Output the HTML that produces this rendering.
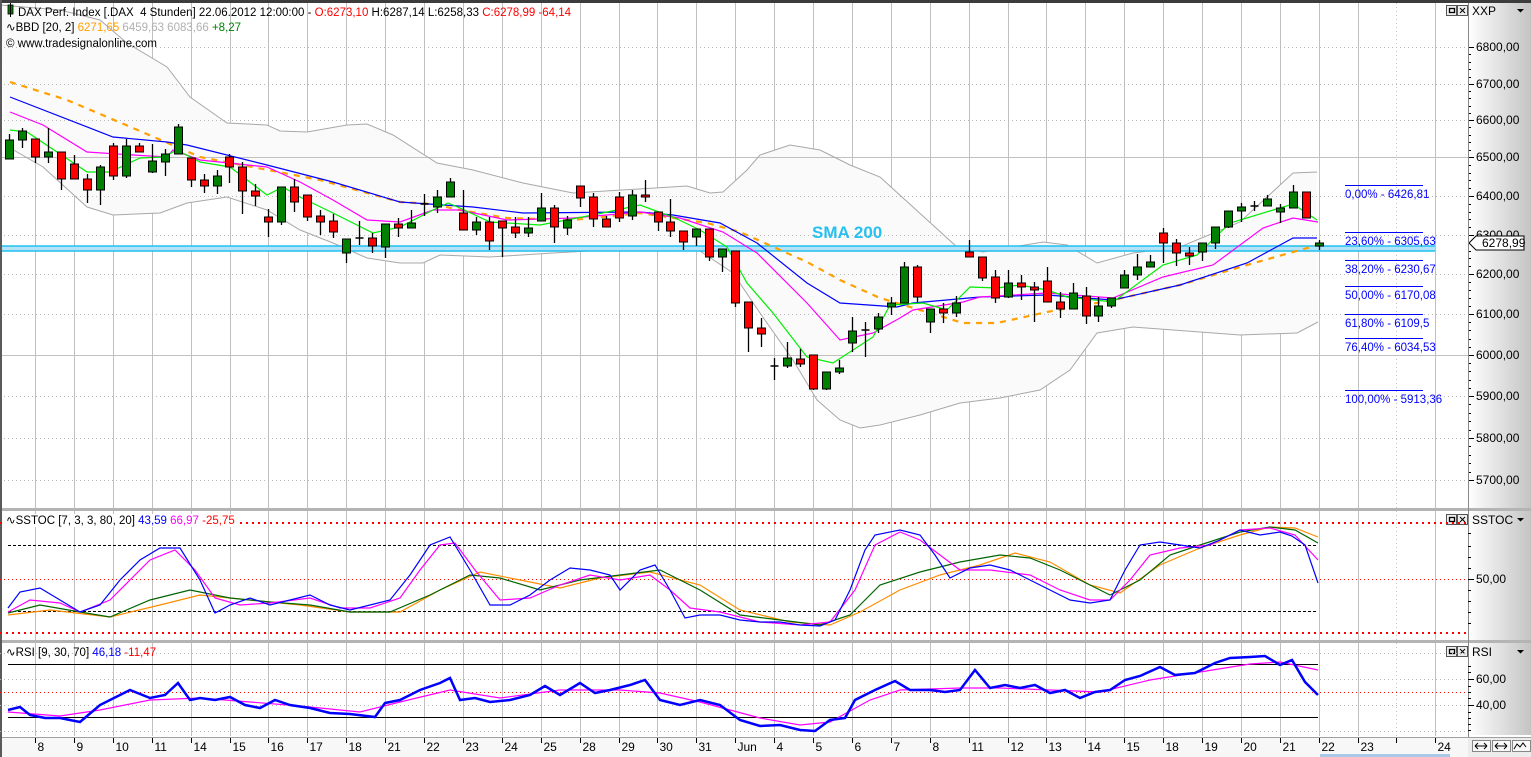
<!DOCTYPE html>
<html><head><meta charset="utf-8"><style>
html,body{margin:0;padding:0;width:1531px;height:757px;overflow:hidden;background:#fff}
svg{display:block;font-family:"Liberation Sans",Tahoma,sans-serif}
</style></head><body>
<svg id="s" width="1531" height="757" xmlns="http://www.w3.org/2000/svg">
<rect x="0" y="0" width="1531" height="757" fill="#fff"/>
<defs><linearGradient id="ax" x1="0" x2="1" y1="0" y2="0"><stop offset="0" stop-color="#ffffff"/><stop offset="1" stop-color="#c4c4c4"/></linearGradient></defs>
<g id="g"></g>
</svg>
<script>
var G=document.getElementById('g'),out='';
function add(s){out+=s;}
function pl(pts,st){var d=pts.map(function(p){return p[0]+','+p[1]}).join(' ');add('<polyline fill="none" points="'+d+'" '+st+'/>');}
function txt(x,y,t,st){add('<text x="'+x+'" y="'+y+'" '+(st||'')+'>'+t+'</text>');}
add('<rect x="1468" y="3" width="63" height="732" fill="url(#ax)"/>');
add('<rect x="1468" y="738" width="63" height="19" fill="#ececec"/>');
add('<rect x="0" y="738" width="1468" height="19" fill="#f7f7f7"/>');
add('<line x1="0" y1="737.5" x2="1531" y2="737.5" stroke="#a0a0a0"/>');
add('<rect x="1320" y="754" width="130" height="3" fill="#a8c8e8"/>');
var ticks=[];for(var k=0;k<34;k++)ticks.push(35+38.9*k);ticks.push(1358);ticks.push(1435);
var labels=['8','9','10','11','14','15','16','17','18','21','22','23','24','25','28','29','30','31','Jun','4','5','6','7','8','11','12','13','14','15','18','19','20','21','22','23','24'];
ticks.forEach(function(x,i){x=Math.round(x)+0.5;
 add('<line x1="'+x+'" y1="3" x2="'+x+'" y2="736" stroke="#c0c0c0"/>');
 add('<line x1="'+x+'" y1="738" x2="'+x+'" y2="743" stroke="#000"/>');
 txt(x+2,751,labels[i],'font-size="12" fill="#000"');});
add('<line x1="1396.5" y1="3" x2="1396.5" y2="736" stroke="#c0c0c0" stroke-dasharray="1,3"/>');
add('<line x1="1396.5" y1="738" x2="1396.5" y2="743" stroke="#000"/>');
var lv=[[6800,47],[6700,84],[6600,120],[6500,157],[6400,196],[6300,235],[6200,274],[6100,314],[6000,355],[5900,396],[5800,438],[5700,480]];
var up=[[0,5],[60,10],[100,20],[127,43],[167,67],[190,97],[227,123],[267,125],[280,131],[307,132],[347,125],[367,124],[393,135],[437,163],[473,170],[523,183],[573,193],[687,186],[710,193],[723,192],[747,170],[760,155],[790,145],[820,150],[850,165],[880,177],[957,247],[983,252],[1043,242],[1067,245],[1097,263],[1133,253],[1180,247],[1240,222],[1293,173],[1317,172]];
var lo=[[5,146],[10,148],[43,167],[87,207],[113,215],[160,213],[187,203],[227,197],[267,210],[300,230],[333,243],[367,258],[400,263],[423,263],[440,255],[490,257],[553,253],[607,250],[653,246],[700,251],[733,273],[760,313],[793,360],[817,400],[840,420],[860,428],[880,425],[920,415],[960,403],[1000,398],[1040,390],[1070,370],[1097,333],[1133,327],[1240,335],[1297,333],[1318,322]];
var poly=up.concat(lo.slice().reverse());
add('<polygon points="'+poly.map(function(p){return p.join(',')}).join(' ')+'" fill="#fafafa"/>');
lv.forEach(function(l){var y=l[1]+0.5;
 if(l[0]==6500||l[0]==6000)add('<line x1="0" y1="'+y+'" x2="1468" y2="'+y+'" stroke="#c0c0c0"/>');
 else add('<line x1="0" y1="'+y+'" x2="1468" y2="'+y+'" stroke="#b8b8b8" stroke-dasharray="1,3"/>');
 add('<line x1="1468" y1="'+y+'" x2="1474" y2="'+y+'" stroke="#000"/>');
 txt(1476,l[1]+4,l[0]+',00','font-size="12" fill="#000"');});
for(var i=0;i<11;i++){for(var j=1;j<5;j++){var y=Math.round(lv[i][1]+(lv[i+1][1]-lv[i][1])*j/5)+0.5;add('<line x1="1468" y1="'+y+'" x2="1471" y2="'+y+'" stroke="#000"/>');}}
pl(up,'stroke="#a8a8a8" stroke-width="1"');pl(lo,'stroke="#a8a8a8" stroke-width="1"');
add('<rect x="0" y="246" width="1435" height="5" fill="#b4e2f6"/>');
add('<line x1="0" y1="246" x2="1435" y2="246" stroke="#20c0f0" stroke-width="1.5"/><line x1="0" y1="251" x2="1435" y2="251" stroke="#20c0f0" stroke-width="1.5"/>');
txt(812,238,'SMA 200','font-size="17" font-weight="bold" fill="#28c0f0"');
var blue=[[10,97],[113,137],[167,142],[187,145],[267,165],[333,182],[400,202],[473,207],[523,213],[640,212],[673,215],[720,223],[757,243],[807,283],[840,303],[897,307],[913,303],[980,297],[1047,295],[1113,300],[1180,285],[1247,263],[1293,238],[1317,238]];
var mag=[[10,112],[43,125],[87,152],[133,155],[167,157],[173,150],[200,160],[267,167],[300,182],[333,200],[367,220],[400,222],[433,210],[460,210],[507,220],[573,218],[640,212],[680,218],[723,232],[757,253],[807,303],[840,340],[873,333],[900,318],[913,310],[963,302],[980,297],[1047,293],[1113,298],[1163,277],[1213,265],[1263,228],[1293,218],[1318,222]];
var grn=[[10,130],[27,132],[87,172],[110,172],[140,158],[163,157],[177,150],[200,162],[230,167],[267,195],[283,187],[300,197],[333,213],[373,233],[400,227],[433,210],[448,203],[460,208],[490,222],[540,225],[593,215],[640,205],[673,217],[700,230],[727,247],[747,283],[773,313],[807,357],[833,363],[873,337],[890,305],[923,303],[947,310],[970,287],[997,288],[1020,285],[1047,290],[1067,297],[1113,302],[1163,265],[1197,255],[1230,223],[1293,204],[1317,220]];
var org=[[10,82],[67,100],[133,128],[200,157],[320,180],[400,202],[433,204],[460,210],[507,218],[573,220],[640,213],[707,223],[740,232],[807,262],[840,280],[880,298],[930,313],[963,323],[997,323],[1047,312],[1113,300],[1180,285],[1247,265],[1318,245]];
pl(org,'stroke="#ffa000" stroke-width="2.2" stroke-dasharray="6,6"');
pl(blue,'stroke="#0000ff" stroke-width="1.2"');
pl(mag,'stroke="#ff00ff" stroke-width="1.2"');
pl(grn,'stroke="#00ee00" stroke-width="1.2"');
var C=[[140,159,134,159,'g'],[131,140,128,148,'g'],[139,157,139,163,'r'],[152,157,128,163,'g'],[152,179,152,190,'r'],[164,179,155,179,'r'],[179,190,174,203,'r'],[167,190,165,205,'g'],[146,176,143,180,'r'],[146,176,139,178,'g'],[146,152,143,152,'r'],[161,172,144,173,'g'],[154,162,149,176,'g'],[127,154,124,154,'g'],[158,180,158,187,'r'],[180,186,174,193,'r'],[176,186,170,194,'g'],[157,167,154,183,'r'],[167,191,162,214,'r'],[191,196,184,206,'r'],[217,222,209,237,'r'],[187,222,187,225,'g'],[187,202,179,212,'r'],[195,217,195,221,'r'],[216,222,210,235,'r'],[221,232,214,238,'r'],[239,253,239,263,'g'],[238,239,221,245,'d'],[238,246,233,253,'r'],[224,247,224,258,'g'],[224,228,218,237,'r'],[223,228,210,228,'g'],[204,205,194,216,'d'],[197,207,190,213,'g'],[182,197,178,197,'g'],[213,230,190,230,'r'],[222,230,217,235,'g'],[222,241,217,250,'r'],[221,228,221,257,'r'],[227,233,217,238,'r'],[228,233,217,237,'g'],[208,221,193,221,'g'],[208,227,205,243,'r'],[220,228,216,235,'g'],[186,198,186,207,'r'],[197,219,193,227,'r'],[219,227,216,227,'r'],[197,218,192,222,'r'],[195,216,190,220,'g'],[195,197,180,202,'r'],[212,222,212,231,'r'],[222,231,199,237,'r'],[231,242,231,250,'r'],[229,237,229,246,'g'],[229,257,229,261,'r'],[249,257,249,272,'g'],[251,303,251,307,'r'],[302,328,302,352,'r'],[328,334,318,347,'r'],[366,367,358,380,'d'],[358,366,342,368,'g'],[359,364,349,367,'r'],[355,389,355,390,'r'],[372,389,372,390,'g'],[368,372,360,374,'g'],[331,343,317,352,'g'],[330,331,322,357,'d'],[317,329,313,333,'g'],[303,307,297,315,'g'],[267,303,262,303,'g'],[267,297,265,302,'r'],[309,322,309,333,'g'],[309,313,303,323,'r'],[303,313,296,317,'g'],[252,257,240,257,'r'],[257,278,257,281,'r'],[277,298,270,303,'r'],[283,297,270,298,'g'],[283,287,275,300,'r'],[287,290,282,322,'r'],[281,302,267,302,'r'],[302,309,292,318,'r'],[293,309,283,309,'g'],[296,316,287,324,'r'],[306,316,297,322,'g'],[298,306,298,308,'g'],[275,288,270,288,'g'],[267,275,254,280,'g'],[262,267,255,267,'g'],[233,243,228,263,'r'],[243,253,239,266,'r'],[253,256,247,265,'r'],[243,252,243,261,'g'],[227,243,227,249,'g'],[211,227,211,228,'g'],[207,211,203,222,'g'],[206,207,201,211,'d'],[199,206,195,206,'g'],[208,212,204,223,'g'],[192,208,185,208,'g'],[192,218,192,218,'r'],[243,246,240,250,'g']];
C.forEach(function(c,i){var x=Math.round(9+12.97*i)+0.5;
 add('<line x1="'+x+'" y1="'+c[2]+'" x2="'+x+'" y2="'+c[3]+'" stroke="#000" stroke-width="1.3"/>');
 if(c[4]=='d'){add('<line x1="'+(x-4)+'" y1="'+c[0]+'" x2="'+(x+4)+'" y2="'+c[0]+'" stroke="#000" stroke-width="1.5"/>');}
 else{var h=Math.max(2,c[1]-c[0]);add('<rect x="'+(x-4)+'" y="'+c[0]+'" width="8" height="'+h+'" fill="'+(c[4]=='g'?'#008000':'#ff0000')+'" stroke="#000" stroke-width="1"/>');}});
var fib=[[185,'0,00% - 6426,81'],[232,'23,60% - 6305,63'],[260,'38,20% - 6230,67'],[286,'50,00% - 6170,08'],[314,'61,80% - 6109,5'],[338,'76,40% - 6034,53'],[390,'100,00% - 5913,36']];
fib.forEach(function(f){add('<line x1="1345" y1="'+(f[0]+0.5)+'" x2="1423" y2="'+(f[0]+0.5)+'" stroke="#0000ff"/>');txt(1345,f[0]+13,f[1],'font-size="11.5" fill="#0000ff"');});
add('<polygon points="1469,243 1476,236 1524,236 1524,250 1476,250" fill="#fff" stroke="#000"/>');
txt(1482,247,'6278,99','font-size="12" fill="#000"');
add('<rect x="8" y="5" width="5" height="9" fill="#008000" stroke="#000" stroke-width="0.8"/><line x1="10.5" y1="3" x2="10.5" y2="17" stroke="#000"/>');
add('<text x="18" y="16" font-size="11.5" fill="#000">DAX Perf. Index [.DAX &#160;4 Stunden] 22.06.2012 12:00:00 - <tspan fill="#ff0000">O:6273,10</tspan> H:6287,14 L:6258,33 <tspan fill="#ff0000">C:6278,99 -64,14</tspan></text>');
add('<text x="6" y="31" font-size="11.5" fill="#000">∿BBD [20, 2] <tspan fill="#ffa000">6271,65</tspan> <tspan fill="#b0b0b0">6459,63 6083,66</tspan> <tspan fill="#008000">+8,27</tspan></text>');
txt(6,47,'© www.tradesignalonline.com','font-size="11.5" fill="#000"');
add('<rect x="0" y="508" width="1531" height="3" fill="#b4b4b4"/>');
add('<rect x="0" y="640" width="1531" height="3" fill="#b4b4b4"/>');
add('<rect x="0" y="0" width="1531" height="3" fill="#3c3c3c"/><rect x="0" y="0" width="2" height="757" fill="#5a5a5a"/>');
add('<line x1="1468.5" y1="3" x2="1468.5" y2="737" stroke="#888"/>');
function btn(y,name){add('<rect x="1446.5" y="'+(y+0.5)+'" width="10" height="10" fill="#eee" stroke="#555"/><rect x="1449.5" y="'+(y+3.5)+'" width="5" height="4" fill="none" stroke="#000" stroke-width="1.3"/>');
 add('<rect x="1457.5" y="'+(y+0.5)+'" width="10" height="10" fill="#eee" stroke="#555"/><path d="M1460 '+(y+3)+'l5 5M1465 '+(y+3)+'l-5 5" stroke="#000"/>');
 txt(1472,y+10,name,'font-size="12" fill="#000"');add('<path d="M1517 '+(y+4)+'h7l-3.5 3.5z" fill="#000"/>');}
btn(5,'XXP');btn(514,'SSTOC');btn(646,'RSI');
add('<line x1="0" y1="523" x2="1468" y2="523" stroke="#ff0000" stroke-width="2" stroke-dasharray="2,4"/>');
add('<line x1="0" y1="633" x2="1468" y2="633" stroke="#ff0000" stroke-width="2" stroke-dasharray="2,4"/>');
add('<line x1="0" y1="579.5" x2="1468" y2="579.5" stroke="#ff0000" stroke-dasharray="1,3"/>');
add('<line x1="8" y1="545.5" x2="1318" y2="545.5" stroke="#000" stroke-dasharray="3,2"/>');
add('<line x1="8" y1="611.5" x2="1318" y2="611.5" stroke="#000" stroke-dasharray="3,2"/>');
add('<line x1="1468" y1="579.5" x2="1474" y2="579.5" stroke="#000"/>');txt(1476,583,'50,00','font-size="12" fill="#000"');
[533,546,557,568,590,601,612,623].forEach(function(y){add('<line x1="1468" y1="'+(y+0.5)+'" x2="1471" y2="'+(y+0.5)+'" stroke="#000"/>');});
var sb=[[8,608],[20,592],[40,588],[60,600],[80,612],[100,605],[120,580],[140,560],[160,548],[180,548],[200,580],[215,613],[230,605],[250,598],[270,605],[290,600],[310,595],[330,605],[350,610],[370,605],[390,600],[410,575],[430,545],[450,537],[470,570],[490,605],[510,605],[530,595],[550,580],[570,568],[590,570],[610,575],[620,590],[640,570],[655,565],[670,590],[685,618],[700,615],[720,615],[740,620],[760,622],[780,622],[800,625],[820,626],[835,620],[850,590],[865,550],[875,535],[900,530],[920,535],[935,555],[950,578],[970,568],[990,565],[1010,570],[1030,580],[1050,590],[1070,600],[1090,603],[1110,600],[1125,570],[1140,545],[1160,542],[1180,545],[1200,548],[1220,540],[1240,530],[1260,535],[1280,532],[1292,536],[1305,545],[1318,583]];
var sm=[[8,612],[30,600],[60,603],[80,612],[110,600],[130,580],[150,560],[175,550],[195,570],[215,598],[240,605],[270,603],[310,598],[340,608],[370,608],[400,598],[420,570],[440,545],[455,543],[475,570],[500,600],[530,598],[560,585],[590,575],[620,580],[650,575],[670,590],[690,608],[720,612],[760,622],[800,625],[830,622],[855,590],[875,545],[900,532],[920,540],[940,555],[960,570],[990,570],[1030,575],[1060,590],[1090,600],[1110,600],[1130,580],[1150,555],[1180,548],[1210,545],[1240,530],[1270,528],[1295,535],[1318,560]];
var sg=[[8,613],[40,605],[80,612],[110,617],[150,600],[190,590],[230,598],[270,602],[310,605],[350,612],[390,612],[430,595],[470,575],[500,578],[540,590],[580,580],[620,575],[660,570],[700,590],[740,615],[780,620],[820,625],[850,615],[880,585],[920,572],[960,562],[1000,555],[1030,558],[1060,570],[1090,585],[1110,595],[1140,580],[1170,555],[1200,545],[1240,532],[1270,527],[1295,530],[1318,543]];
var so=[[8,615],[50,610],[110,617],[160,605],[200,595],[250,600],[300,605],[350,612],[400,612],[440,590],[480,572],[520,580],[560,588],[600,578],[650,572],[700,585],[740,610],[790,622],[830,625],[860,612],[900,590],[940,575],[980,565],[1015,553],[1050,562],[1090,585],[1120,593],[1160,565],[1200,548],[1240,535],[1270,527],[1295,528],[1318,537]];
pl(so,'stroke="#ff8c00" stroke-width="1.2"');pl(sg,'stroke="#006400" stroke-width="1.2"');pl(sm,'stroke="#ff00ff" stroke-width="1.2"');pl(sb,'stroke="#0000ff" stroke-width="1.2"');
add('<rect x="4" y="514" width="232" height="13" fill="#fff"/>');
add('<text x="6" y="524" font-size="11.5" fill="#000">∿SSTOC [7, 3, 3, 80, 20] <tspan fill="#0000ff">43,59</tspan> <tspan fill="#ff00ff">66,97</tspan> <tspan fill="#ff0000">-25,75</tspan></text>');
[653,679,705,731].forEach(function(y){add('<line x1="0" y1="'+(y+0.5)+'" x2="1468" y2="'+(y+0.5)+'" stroke="#b8b8b8" stroke-dasharray="1,3"/>');});
add('<line x1="0" y1="692.5" x2="1468" y2="692.5" stroke="#ff0000" stroke-dasharray="1,3"/>');
add('<line x1="8" y1="664.5" x2="1318" y2="664.5" stroke="#000"/><line x1="8" y1="717.5" x2="1318" y2="717.5" stroke="#000"/>');
[[679,'60,00'],[705,'40,00']].forEach(function(l){add('<line x1="1468" y1="'+(l[0]+0.5)+'" x2="1474" y2="'+(l[0]+0.5)+'" stroke="#000"/>');txt(1476,l[0]+4,l[1],'font-size="12" fill="#000"');});
[666,672,686,692,698,712,718,724,730].forEach(function(y){add('<line x1="1468" y1="'+(y+0.5)+'" x2="1471" y2="'+(y+0.5)+'" stroke="#000"/>');});
var rb=[[8,710],[20,707],[30,715],[45,718],[60,718],[80,722],[100,705],[120,695],[130,690],[150,698],[165,695],[178,683],[190,700],[200,698],[215,700],[230,697],[245,705],[260,708],[275,700],[290,705],[310,708],[330,713],[350,714],[375,717],[385,703],[400,700],[420,690],[440,683],[450,678],[460,700],[475,698],[490,702],[510,700],[530,695],[545,686],[560,695],[580,683],[595,693],[610,690],[630,685],[645,680],[660,700],[680,705],[700,700],[720,705],[740,720],[760,726],[780,725],[800,730],[815,731],[830,720],[845,718],[855,700],[875,690],[895,681],[910,690],[930,690],[945,692],[960,690],[975,670],[990,688],[1005,685],[1020,688],[1035,685],[1050,693],[1065,690],[1080,698],[1095,692],[1110,690],[1125,680],[1140,676],[1160,667],[1175,675],[1195,673],[1215,663],[1230,658],[1250,657],[1265,656],[1280,665],[1292,660],[1305,682],[1318,695]];
var rm=[[8,712],[60,716],[100,710],[150,700],[200,698],[250,702],[300,706],[360,712],[400,702],[450,690],[500,698],[560,690],[620,690],[660,693],[700,702],[760,718],[800,725],[830,722],[870,700],[900,690],[960,688],[1000,688],[1100,692],[1150,680],[1200,672],[1250,664],[1280,662],[1318,670]];
pl(rm,'stroke="#ff00ff" stroke-width="1.2"');pl(rb,'stroke="#0000ff" stroke-width="2.5"');
add('<text x="6" y="656" font-size="11.5" fill="#000">∿RSI [9, 30, 70] <tspan fill="#0000ff">46,18</tspan> <tspan fill="#ff0000">-11,47</tspan></text>');
[1472,1492,1512].forEach(function(x){add('<rect x="'+(x+0.5)+'" y="740.5" width="18" height="11" fill="#f8f8f8" stroke="#888"/>');});
add('<path d="M1475 746h12M1475 746l3-3M1475 746l3 3M1487 746l-3-3M1487 746l-3 3M1495 746h12M1495 746l3-3M1495 746l3 3M1507 746l-3-3M1507 746l-3 3M1514 749l3-5 3 3 3-4 3 4" stroke="#000" fill="none"/>');
G.innerHTML=out;
</script>
</body></html>
